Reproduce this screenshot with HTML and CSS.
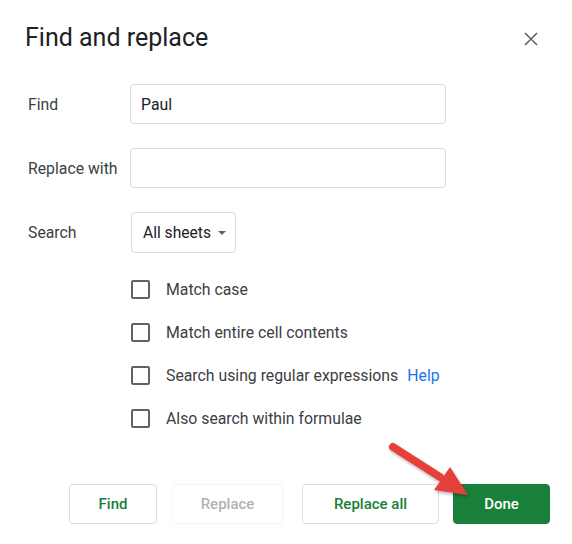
FILE: index.html
```html
<!DOCTYPE html>
<html lang="en">
<head>
  <meta charset="UTF-8" />
  <title>Find and replace</title>
  <link rel="stylesheet" href="styles.css">
</head>
<body>
  <div class="dialog">
    <div class="dialog-header">
      <h1 class="title">Find and replace</h1>
      <svg class="close" width="14" height="14" viewBox="0 0 14 14">
        <path d="M1 1 L13 13 M13 1 L1 13" stroke="#5f6368" stroke-width="1.6" fill="none"/>
      </svg>
    </div>

    <div class="form">
      <label class="label">Find</label>
      <div class="field"><input class="text-input" type="text" value="Paul"></div>

      <label class="label">Replace with</label>
      <div class="field"><input class="text-input" type="text" value=""></div>

      <label class="label">Search</label>
      <div class="field">
        <div class="select">
          <span>All sheets</span>
          <span class="caret"></span>
        </div>
      </div>
    </div>

    <div class="options">
      <div class="option"><span class="box"></span><span>Match case</span></div>
      <div class="option"><span class="box"></span><span>Match entire cell contents</span></div>
      <div class="option"><span class="box"></span><span>Search using regular expressions</span><a class="help">Help</a></div>
      <div class="option"><span class="box"></span><span>Also search within formulae</span></div>
    </div>

    <div class="actions">
      <button class="btn btn-find">Find</button>
      <button class="btn btn-disabled">Replace</button>
      <button class="btn btn-all">Replace all</button>
      <button class="btn btn-done">Done</button>
    </div>

    <!-- red annotation arrow pointing at Done -->
    <svg class="arrow" width="120" height="80" viewBox="0 0 120 80">
      <defs>
        <filter id="shadow" x="-20%" y="-20%" width="140%" height="140%">
          <feDropShadow dx="1" dy="2" stdDeviation="1.5" flood-color="#000" flood-opacity="0.3"/>
        </filter>
      </defs>
      <g filter="url(#shadow)">
        <line x1="13" y1="17" x2="60" y2="47" stroke="#e5403a" stroke-width="8" stroke-linecap="round"/>
        <polygon points="54,60 70,37 88,65" fill="#e5403a"/>
      </g>
    </svg>
  </div>
</body>
</html>
```

FILE: styles.css
```css
body {
  margin: 0;
  background: #fff;
  font-family: Roboto, "Liberation Sans", sans-serif;
  color: #3c4043;
}

.dialog {
  position: relative;
  width: 572px;
  height: 544px;
}

.dialog-header {
  display: flex;
  justify-content: space-between;
  align-items: center;
  padding: 21px 34px 0 25px;
  height: 34px;
}

.title {
  margin: 0;
  font-size: 25px;
  font-weight: 400;
  color: #202124;
  line-height: 34px;
}

.close {
  margin-top: 2px;
}

.form {
  display: grid;
  grid-template-columns: 102px 316px;
  row-gap: 24px;
  padding-left: 28px;
  margin-top: 29px;
  align-items: center;
}

.label {
  font-size: 15.8px;
  color: #3c4043;
}

.text-input {
  box-sizing: border-box;
  width: 316px;
  height: 40px;
  border: 1px solid #dadce0;
  border-radius: 4px;
  padding: 0 10px;
  font-family: Roboto, "Liberation Sans", sans-serif;
  font-size: 15.8px;
  color: #202124;
  outline: none;
}

.select {
  box-sizing: border-box;
  display: inline-flex;
  align-items: center;
  height: 41px;
  margin-left: 1px;
  padding: 0 9px 0 11px;
  border: 1px solid #dadce0;
  border-radius: 4px;
  font-size: 15.6px;
  color: #202124;
}

.caret {
  margin-left: 7px;
  width: 0;
  height: 0;
  border-left: 4px solid transparent;
  border-right: 4px solid transparent;
  border-top: 4px solid #5f6368;
}

.options {
  margin-top: 15px;
  padding-left: 131px;
}

.option {
  display: flex;
  align-items: center;
  height: 43px;
  font-size: 15.8px;
  color: #3c4043;
}

.box {
  box-sizing: border-box;
  width: 19px;
  height: 19px;
  border: 2px solid #5f6368;
  border-radius: 2px;
  margin-right: 16px;
}

.help {
  margin-left: 9px;
  color: #1a73e8;
}

.actions {
  display: flex;
  margin-top: 44px;
  padding-left: 69px;
}

.btn {
  box-sizing: border-box;
  height: 40px;
  border-radius: 4px;
  font-family: Roboto, "Liberation Sans", sans-serif;
  font-size: 15px;
  font-weight: 500;
  background: #fff;
  border: 1px solid #dadce0;
  color: #188038;
  padding: 0;
}

.btn-find {
  width: 88px;
}

.btn-disabled {
  width: 111px;
  margin-left: 15px;
  border-color: #f5f5f5;
  color: #b0b3b6;
}

.btn-all {
  width: 137px;
  margin-left: 19px;
}

.btn-done {
  width: 97px;
  margin-left: 14px;
  background: #188038;
  border-color: #188038;
  color: #fff;
}

.arrow {
  position: absolute;
  left: 380px;
  top: 430px;
}
```
